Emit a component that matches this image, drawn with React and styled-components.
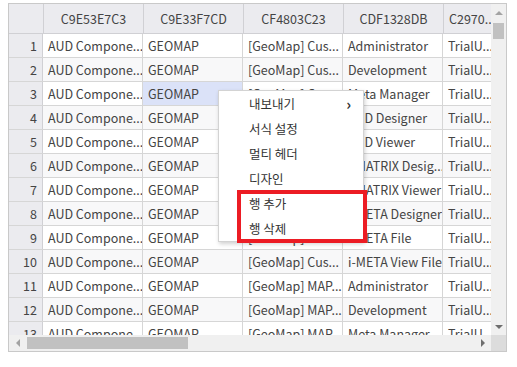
import React from "react";
import styled, { createGlobalStyle } from "styled-components";

const GlobalStyle = createGlobalStyle`
  html, body {
    margin: 0;
    padding: 0;
    background: #ffffff;
  }
  body {
    font-family: "Noto Sans CJK KR", "Noto Sans", sans-serif;
  }
`;

const columns = ["C9E53E7C3", "C9E33F7CD", "CF4803C23", "CDF1328DB", "C2970..."];
const widths = [100, 100, 100, 100, 56];

const rows = [
  ["AUD Compone...", "GEOMAP", "[GeoMap] Cus...", "Administrator", "TrialU..."],
  ["AUD Compone...", "GEOMAP", "[GeoMap] Cus...", "Development", "TrialU..."],
  ["AUD Compone...", "GEOMAP", "[GeoMap] Cus...", "Meta Manager", "TrialU..."],
  ["AUD Compone...", "GEOMAP", "[GeoMap] Cus...", "AUD Designer", "TrialU..."],
  ["AUD Compone...", "GEOMAP", "[GeoMap] Cus...", "AUD Viewer", "TrialU..."],
  ["AUD Compone...", "GEOMAP", "[GeoMap] Cus...", "i-MATRIX Desig...", "TrialU..."],
  ["AUD Compone...", "GEOMAP", "[GeoMap] Cus...", "i-MATRIX Viewer", "TrialU..."],
  ["AUD Compone...", "GEOMAP", "[GeoMap] Cus...", "i-META Designer", "TrialU..."],
  ["AUD Compone...", "GEOMAP", "[GeoMap] Cus...", "i-META File", "TrialU..."],
  ["AUD Compone...", "GEOMAP", "[GeoMap] Cus...", "i-META View File", "TrialU..."],
  ["AUD Compone...", "GEOMAP", "[GeoMap] MAP...", "Administrator", "TrialU..."],
  ["AUD Compone...", "GEOMAP", "[GeoMap] MAP...", "Development", "TrialU..."],
  ["AUD Compone...", "GEOMAP", "[GeoMap] MAP...", "Meta Manager", "TrialU..."],
];

const menuItems = ["내보내기", "서식 설정", "멀티 헤더", "디자인", "행 추가", "행 삭제"];

export default function App() {
  return (
    <>
      <GlobalStyle />
      <Page>
        <Grid>
          <Body>
            <Viewport>
              <HeaderRow>
                <Corner />
                {columns.map((c, i) => (
                  <HeaderCell key={c} style={{ width: widths[i] }} $last={i === 4}>
                    {c}
                  </HeaderCell>
                ))}
              </HeaderRow>
              {rows.map((r, ri) => (
                <Row key={ri} $alt={ri % 2 === 1}>
                  <RowNum>{ri + 1}</RowNum>
                  {r.map((v, ci) => (
                    <Cell
                      key={ci}
                      style={{ width: widths[ci] }}
                      $selected={ri === 2 && ci === 1}
                    >
                      {v}
                    </Cell>
                  ))}
                </Row>
              ))}
            </Viewport>
            <VScroll>
              <Arrow $dir="up" />
              <VTrack>
                <VThumb />
              </VTrack>
              <Arrow $dir="down" />
            </VScroll>
          </Body>
          <HScroll>
            <Arrow $dir="left" />
            <HTrack>
              <HThumb />
            </HTrack>
            <Arrow $dir="right" />
            <ScrollCorner />
          </HScroll>

          <Menu>
            {menuItems.map((m, i) => (
              <MenuItem key={m}>
                <span>{m}</span>
                {i === 0 && <SubArrow>›</SubArrow>}
              </MenuItem>
            ))}
          </Menu>
          <Highlight />
        </Grid>
      </Page>
    </>
  );
}

const Page = styled.div`
  padding: 3px 10px 0 8px;
`;

const Grid = styled.div`
  position: relative;
  width: 499px;
  height: 349px;
  box-sizing: border-box;
  border: 1px solid #c9c9c9;
  display: flex;
  flex-direction: column;
  font-size: 12.5px;
  color: #444444;
`;

const Body = styled.div`
  flex: 1;
  display: flex;
  min-height: 0;
`;

const Viewport = styled.div`
  flex: 1;
  overflow: hidden;
`;

const HeaderRow = styled.div`
  display: flex;
  height: 29px;
  background: #ebebef;
  border-bottom: 1px solid #d0d0d4;
`;

const Corner = styled.div`
  width: 34px;
  flex: none;
  border-right: 1px solid #d0d0d4;
`;

const HeaderCell = styled.div`
  flex: none;
  box-sizing: border-box;
  border-right: 1px solid #d0d0d4;
  padding: ${(p) => (p.$last ? "0 0 0 5px" : "0 2px")};
  white-space: nowrap;
  overflow: hidden;
  line-height: 29px;
  text-align: ${(p) => (p.$last ? "left" : "center")};
`;

const Row = styled.div`
  display: flex;
  height: 23px;
  border-bottom: 1px solid #d6d6d6;
  background: ${(p) => (p.$alt ? "#f8f8f9" : "#ffffff")};
`;

const RowNum = styled.div`
  width: 34px;
  flex: none;
  box-sizing: border-box;
  background: #ebebef;
  border-right: 1px solid #d0d0d4;
  text-align: right;
  padding-right: 5px;
  line-height: 23px;
`;

const Cell = styled.div`
  flex: none;
  box-sizing: border-box;
  border-right: 1px solid #d6d6d6;
  padding: 0 2px 0 5px;
  line-height: 23px;
  white-space: nowrap;
  overflow: hidden;
  background: ${(p) => (p.$selected ? "#dbe2f8" : "transparent")};
`;

const VScroll = styled.div`
  width: 15px;
  flex: none;
  background: #f0f0f0;
  display: flex;
  flex-direction: column;
`;

const VTrack = styled.div`
  flex: 1;
  padding: 0 2px;
`;

const VThumb = styled.div`
  height: 16px;
  margin-top: 2px;
  background: #c1c1c1;
`;

const HScroll = styled.div`
  height: 16px;
  flex: none;
  background: #f0f0f0;
  display: flex;
`;

const HTrack = styled.div`
  flex: 1;
  padding: 2px 0;
`;

const HThumb = styled.div`
  width: 161px;
  height: 12px;
  margin-left: 1px;
  background: #c1c1c1;
`;

const ScrollCorner = styled.div`
  width: 15px;
  background: #dcdcdc;
`;

const arrowBorders = {
  up: "border-left: 4px solid transparent; border-right: 4px solid transparent; border-bottom: 4px solid #a3a3a3;",
  down: "border-left: 4px solid transparent; border-right: 4px solid transparent; border-top: 4px solid #6e6e6e;",
  left: "border-top: 4px solid transparent; border-bottom: 4px solid transparent; border-right: 4px solid #a3a3a3;",
  right: "border-top: 4px solid transparent; border-bottom: 4px solid transparent; border-left: 4px solid #6e6e6e;",
};

const Arrow = styled.div`
  flex: none;
  width: ${(p) => (p.$dir === "up" || p.$dir === "down" ? "15px" : "17px")};
  height: ${(p) => (p.$dir === "up" || p.$dir === "down" ? "17px" : "16px")};
  display: flex;
  align-items: center;
  justify-content: center;
  &::before {
    content: "";
    width: 0;
    height: 0;
    ${(p) => arrowBorders[p.$dir]}
  }
`;

const Menu = styled.div`
  position: absolute;
  left: 209px;
  top: 86px;
  width: 144px;
  background: #ffffff;
  border: 1px solid #d3d3d3;
  box-shadow: 1px 2px 4px rgba(0, 0, 0, 0.18);
  font-size: 12.5px;
  color: #333333;
  z-index: 2;
`;

const MenuItem = styled.div`
  height: 25px;
  display: flex;
  align-items: center;
  justify-content: space-between;
  padding: 0 12px 0 30px;
`;

const SubArrow = styled.span`
  font-size: 15px;
  font-weight: bold;
  line-height: 1;
`;

const Highlight = styled.div`
  position: absolute;
  left: 228px;
  top: 186px;
  width: 130px;
  height: 53px;
  box-sizing: border-box;
  border: 4px solid #ec1c24;
  z-index: 3;
`;
